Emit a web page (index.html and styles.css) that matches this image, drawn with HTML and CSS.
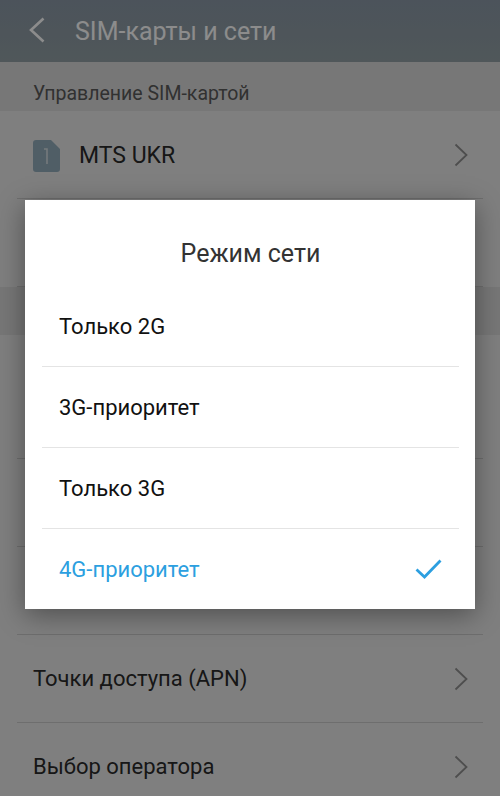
FILE: index.html
```html
<!DOCTYPE html>
<html lang="ru">
<head>
<meta charset="utf-8">
<title>SIM-карты и сети</title>
<link rel="stylesheet" href="styles.css">
</head>
<body>
<div class="screen">
  <header class="appbar">
    <svg class="back" viewBox="0 0 16 26" width="16" height="26"><path d="M14.500 1.500 2 13l12.500 11.500"/></svg>
    <h1 class="appbar-title">SIM-карты и сети</h1>
  </header>
  <main>
    <div class="section">Управление SIM-картой</div>
    <div class="row">
      <svg class="sim" viewBox="0 0 27 32" width="27" height="32"><path class="sim-body" d="M3 0h15l9 9v20a3 3 0 0 1-3 3H3a3 3 0 0 1-3-3V3a3 3 0 0 1 3-3z"/><path class="sim-num" d="M11 9h3v15"/></svg>
      <span class="sim-name">MTS UKR</span>
      <svg class="chev" viewBox="0 0 14 24" width="14" height="24"><path d="M1.500 1.500 12.500 12 1.500 22.500"/></svg>
    </div>
    <div class="row"></div>
    <div class="band"></div>
    <div class="row row-tall"></div>
    <div class="row"></div>
    <div class="row"></div>
    <div class="row">
      <span class="label">Точки доступа (APN)</span>
      <svg class="chev" viewBox="0 0 14 24" width="14" height="24"><path d="M1.500 1.500 12.500 12 1.500 22.500"/></svg>
    </div>
    <div class="row">
      <span class="label">Выбор оператора</span>
      <svg class="chev" viewBox="0 0 14 24" width="14" height="24"><path d="M1.500 1.500 12.500 12 1.500 22.500"/></svg>
    </div>
  </main>
  <div class="scrim"></div>
  <section class="dialog">
    <h2 class="dialog-title">Режим сети</h2>
    <div class="option">Только 2G</div>
    <div class="option">3G-приоритет</div>
    <div class="option">Только 3G</div>
    <div class="option option-active">4G-приоритет
      <svg class="check" viewBox="0 0 27 20" width="27" height="20"><path d="M1.500 10.500 9.500 18 25.500 1.500"/></svg>
    </div>
  </section>
</div>
</body>
</html>
```
FILE: styles.css
```css
* { box-sizing: border-box; }
html, body { margin: 0; padding: 0; }
body { font-family: Roboto, "Noto Sans", sans-serif; }
.screen { position: relative; width: 500px; height: 796px; overflow: hidden; background: #e8e8e8; }
.appbar { height: 62px; display: flex; align-items: center; padding-left: 29px; background: linear-gradient(#8a98a6, #929fa4); }
.back { fill: none; stroke: #fff; stroke-width: 2.600; margin-top: -2px; }
.appbar-title { margin: 0 0 0 30px; font-size: 25px; font-weight: 400; color: #fff; white-space: nowrap; }
.section { height: 49px; padding: 20px 0 0 33px; background: #d9d9d9; font-size: 19.500px; line-height: 24px; color: #5a5a5a; }
.row { position: relative; height: 88px; margin: 0 17px; padding: 0 17px 0 16px; display: flex; align-items: center; border-bottom: 1px solid #c8c8c8; }
.row-tall { height: 124px; }
.band { height: 48px; background: #d9d9d9; }
.sim { flex: none; margin-top: 2px; }
.sim-body { fill: #93acba; }
.sim-num { fill: none; stroke: #d4dde2; stroke-width: 1.600; }
.sim-name { margin-left: 19px; padding-top: 2px; font-size: 23px; color: #2a2a2a; }
.label { font-size: 22px; color: #2a2a2a; }
.chev { position: absolute; right: 15px; top: 50%; margin-top: -12px; fill: none; stroke: #8e8e8e; stroke-width: 1.800; }
.scrim { position: absolute; inset: 0; background: rgba(0, 0, 0, .45); }
.dialog { position: absolute; left: 25px; top: 200px; width: 450px; height: 409px; padding: 0 16px 0 17px; background: #fff; box-shadow: 0 6px 26px rgba(0, 0, 0, .38); }
.dialog-title { margin: 0; height: 86px; padding-top: 38px; text-align: center; font-size: 25px; line-height: 32px; font-weight: 400; color: #333; }
.option { position: relative; height: 81px; padding: 0 17px; display: flex; align-items: center; font-size: 22px; color: #111; border-bottom: 1px solid #e4e4e4; }
.option-active { height: 80px; color: #2c9fe0; border-bottom: 0; justify-content: space-between; }
.check { fill: none; stroke: #2c9fe0; stroke-width: 2.800; }
```
